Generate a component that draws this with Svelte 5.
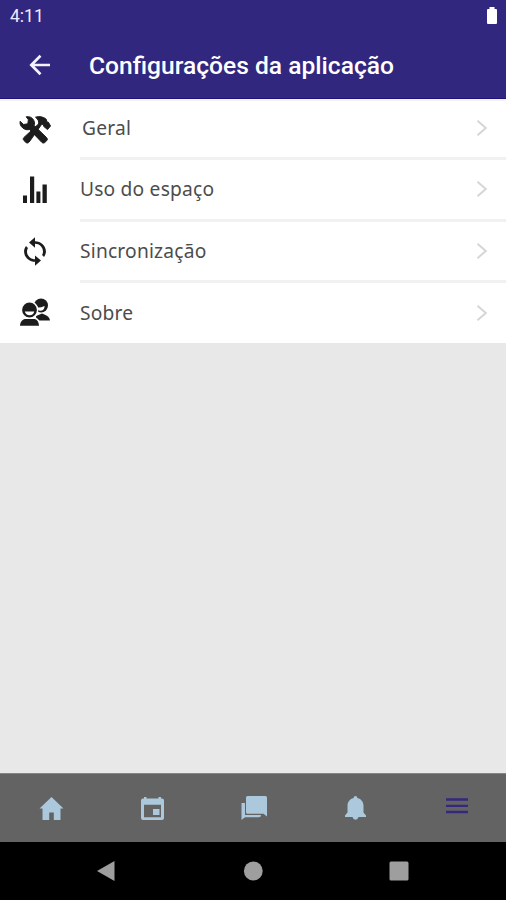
<script lang="ts">
	const title: string = 'Configurações da aplicação';
	const items = [
		{ icon: 'tools', label: 'Geral' },
		{ icon: 'chart', label: 'Uso do espaço' },
		{ icon: 'sync', label: 'Sincronização' },
		{ icon: 'people', label: 'Sobre' }
	];
	const tabs: string[] = ['home', 'calendar', 'messages', 'bell', 'menu'];
	let active: string = 'menu';
</script>

<div class="screen">
	<header>
		<div class="status">
			<span>4:11</span>
			<svg class="battery" viewBox="0 0 12 18">
				<path d="M3.5 0h5v2H10q1 0 1 1v13q0 1-1 1H2q-1 0-1-1V3q0-1 1-1h1.5z" />
			</svg>
		</div>
		<div class="toolbar">
			<svg class="back" viewBox="0 0 24 24">
				<path d="M22 12H3.500M12.500 2.800 3.300 12l9.200 9.200" />
			</svg>
			<h1>{title}</h1>
		</div>
	</header>

	<ul class="list">
		{#each items as item}
			<li class="item {item.icon}">
				<span class="icon">
					{#if item.icon === 'tools'}
						<svg class="heavy" width="32" height="28" viewBox="-1 0.500 32 28">
							<path
								d="M6.200 1.300c3.200-.6 6 .6 7.500 3.400 1 1.900 1 3.600.4 5.300L26.500 22c1.200 1.200 1 2.200.2 3.200l-1.700 1.600c-1 1-2.200 1-3.300-.1L9.500 14c-2.200.6-4.800.1-6.700-1.500C.7 10.800-.3 8.600.1 5.800L3.600 9l4.200-.7.6-4.100z"
							/>
							<path
								d="M15.500 1.700c4-1.300 7.700-.4 10.700 2l.8 2.800 1.400.2 2.100 3.800-3 3.600-3.900-3.300-.2-2-1.900.2L9.200 26.500c-1.100 1.200-2.300 1.300-3.300.4L4 25.100c-1.100-1-1-2.100 0-3.200L18.500 8.500c.7-2.400-.4-4.800-3-6.800z"
							/>
						</svg>
					{:else if item.icon === 'chart'}
						<svg width="24" height="27" viewBox="0 0 24 27">
							<path d="M0 19.500h4V27H0zM7 .5h4.200V27H7zM13.400 15.500h4V27h-4zM19.500 8.500h4.300V27h-4.300z" />
						</svg>
					{:else if item.icon === 'sync'}
						<svg width="32" height="31" viewBox="0 0 24 24" preserveAspectRatio="none">
							<path
								d="M12 4V1L7.500 5l4.500 4V6c3.310 0 6 2.690 6 6 0 1.010-.25 1.970-.7 2.800l1.460 1.460C19.540 15.030 20.200 13.570 20.200 12c0-4.420-3.780-8-8.200-8zm0 14c-3.310 0-6-2.690-6-6 0-1.010.25-1.970.7-2.800L5.240 7.740C4.460 8.970 3.800 10.430 3.800 12c0 4.420 3.780 8 8.200 8v3l4.500-4-4.500-4v3z"
							/>
						</svg>
					{:else}
						<svg width="30" height="28" viewBox="0 0 30 28">
							<path d="M16.500 22.500 16 18l6-2.500 3.500 1.500q4 1.500 4.500 5.500z" />
							<circle cx="21" cy="7.500" r="7" />
							<path class="face" d="M17 9.700q4.500 0 7.600-1.700 0 4.200-3.600 4.800-3 0-4-3.100z" />
							<path class="ring" d="M-1 28.500q.5-7 5.500-8.300h10.500q4.500 1.300 5 8.300z" />
							<circle class="ring" cx="9.500" cy="12" r="8.200" />
							<path class="face" d="M4.800 13.500h9.500q-.8 3.700-4.700 3.700t-4.800-3.700z" />
						</svg>
					{/if}
				</span>
				<div class="body">
					<span class="label">{item.label}</span>
					<svg class="chevron" viewBox="0 0 12 18">
						<path d="M1.500 1.800 9.800 9l-8.300 7.200" />
					</svg>
				</div>
			</li>
		{/each}
	</ul>

	<main></main>

	<nav class="tabs">
		{#each tabs as tab}
			<button class:active={tab === active} aria-label={tab} on:click={() => (active = tab)}>
				<svg viewBox="0 0 27 27">
					{#if tab === 'home'}
						<path d="M13.500 2 1.500 13.500h3V25h6.700v-7.500h4.600V25h6.700V13.500h3z" />
					{:else if tab === 'calendar'}
						<path
							fill-rule="evenodd"
							d="M5 2h2.500v1.500h12V2H22v1.500h1q2 0 2 2V23q0 2-2 2H4q-2 0-2-2V5.500q0-2 2-2h1zM5 9.700v12.500h17V9.700zM14 14h6.500v6H14z"
						/>
					{:else if tab === 'messages'}
						<path d="M6.500 1h18Q26 1 26 2.500v19l-3.500-2.800h-16Q5 18.700 5 17.200V2.500Q5 1 6.500 1z" />
						<path d="M.5 8H4v11.900h16q0 2.300-2 2.300H4L.5 25z" />
					{:else if tab === 'bell'}
						<path
							d="M13.500 1q1.700 0 1.900 2c4 1 6.100 4 6.100 8v6.500L24 20.500V22H3v-1.500l2.500-3V11c0-4 2.100-7 6.100-8q.2-2 1.900-2zM10.500 22h6q-.7 2.800-3 2.800t-3-2.800z"
						/>
					{:else}
						<path d="M3 3.200h22v2.500H3zM3 9.700h22V12H3zM3 15.800h22v2.500H3z" />
					{/if}
				</svg>
			</button>
		{/each}
	</nav>

	<div class="system">
		<svg viewBox="0 0 20 22"><path d="M1 11 18.500 1v20z" /></svg>
		<svg viewBox="0 0 20 20"><circle cx="10.300" cy="10" r="9.400" /></svg>
		<svg viewBox="0 0 20 20"><rect x=".5" y=".5" width="19" height="19" rx="1.500" /></svg>
	</div>
</div>

<style>
	:global(body) {
		background: #e8e8e8;
	}
	.screen {
		display: flex;
		flex-direction: column;
		height: 900px;
		background: #e8e8e8;
	}
	header {
		height: 99px;
		box-sizing: border-box;
		background: #32277f;
		border-bottom: 1px solid #22127c;
		color: #fff;
		font-family: Roboto, sans-serif;
	}
	.status {
		display: flex;
		justify-content: space-between;
		align-items: center;
		height: 32px;
		padding: 0 8px 0 10px;
		font-size: 17.5px;
		color: #eeecfa;
	}
	.battery {
		width: 12px;
		height: 18px;
		fill: #fff;
	}
	.toolbar {
		display: flex;
		align-items: center;
		height: 66px;
		padding-left: 28px;
	}
	.back {
		width: 24px;
		height: 24px;
		fill: none;
		stroke: #f4f2ff;
		stroke-width: 2.7;
	}
	h1 {
		margin: 0 0 0 37px;
		font-size: 24.6px;
		font-weight: 500;
		white-space: nowrap;
	}
	.list {
		margin: 0;
		padding: 0;
		list-style: none;
		background: #fff;
		border-top: 2px solid #f3f2f0;
		height: 242px;
		display: grid;
		grid-template-rows: 59px 61.7px 61.7px 59.6px;
	}
	.item {
		display: flex;
	}
	.icon {
		width: 70px;
		display: flex;
		align-items: center;
		justify-content: center;
		fill: #1c1c1c;
	}
	.icon svg {
		display: block;
		margin-bottom: 2px;
	}
	.heavy {
		stroke: #1c1c1c;
		stroke-width: 1;
		stroke-linejoin: round;
	}
	.face {
		fill: #fff;
	}
	.ring {
		stroke: #fff;
		stroke-width: 1.6;
	}
	.body {
		flex: 1;
		display: flex;
		align-items: center;
		justify-content: space-between;
		margin-left: 10px;
		padding-right: 18px;
		border-bottom: 3px solid #f1f1f1;
	}
	.item:last-child .body {
		border-bottom: 0;
	}
	.label {
		padding-bottom: 2px;
		font-family: 'Noto Sans', sans-serif;
		font-size: 19.2px;
		letter-spacing: 0.2px;
		color: #4c4c4c;
	}
	.tools .label {
		padding: 0 0 4px 2px;
	}
	.tools .chevron {
		margin-bottom: 2px;
	}
	.chevron {
		width: 12px;
		height: 18px;
		fill: none;
		stroke: #d6d6d6;
		stroke-width: 2;
	}
	main {
		flex: 1;
	}
	.tabs {
		display: flex;
		height: 69px;
		background: #636363;
		border-top: 1px solid #858585;
		box-sizing: border-box;
	}
	.tabs button {
		flex: 1;
		display: flex;
		align-items: center;
		justify-content: center;
		padding: 0;
		border: 0;
		background: none;
	}
	.tabs svg {
		width: 27px;
		height: 27px;
		margin-left: 2px;
		fill: #abc8dc;
	}
	.tabs .active svg {
		fill: #35287f;
	}
	.system {
		display: flex;
		align-items: center;
		justify-content: space-between;
		height: 58px;
		padding: 0 97px 0 96px;
		background: #000;
		box-sizing: border-box;
	}
	.system svg {
		width: 20px;
		height: 22px;
		fill: #9e9e9e;
	}
</style>
